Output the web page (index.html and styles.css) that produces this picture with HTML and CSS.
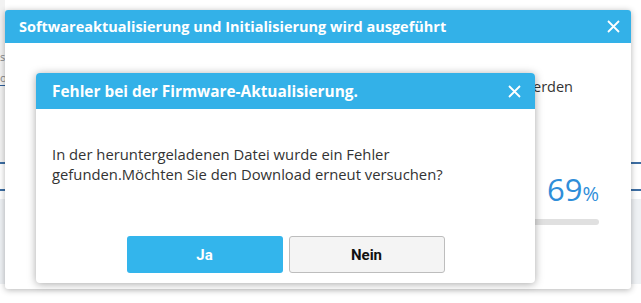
FILE: index.html
```html
<!DOCTYPE html>
<html lang="de">
<head>
    <meta charset="UTF-8">
    <title>Softwareaktualisierung</title>
    <link rel="stylesheet" href="styles.css">
</head>
<body>
    <!-- Hintergrundseite -->
    <div class="page">
        <div class="page-top">
            <span class="frag">s</span>
            <span class="frag frag-link">o</span>
        </div>
        <div class="page-line"></div>
        <div class="page-line line-b"></div>
        <div class="page-band"></div>
    </div>

    <!-- Aktualisierungsdialog -->
    <div class="dialog dialog-update">
        <div class="dialog-header">
            <span class="dialog-title">Softwareaktualisierung und Initialisierung wird ausgeführt</span>
            <svg class="dialog-close" width="13" height="13" viewBox="0 0 13 13"><path d="M1 1L12 12M12 1L1 12" stroke="#fff" stroke-width="1.8"/></svg>
        </div>
        <div class="update-body">
            <p class="update-note">Daten installiert werden</p>
            <div class="update-progress">
                <div class="percent">69<small>%</small></div>
                <div class="bar"><div class="bar-fill" style="width: 69%"></div></div>
            </div>
        </div>
    </div>

    <!-- Fehlerdialog -->
    <div class="dialog dialog-error">
        <div class="dialog-header error-header">
            <span class="dialog-title">Fehler bei der Firmware-Aktualisierung.</span>
            <svg class="dialog-close" width="13" height="13" viewBox="0 0 13 13"><path d="M1 1L12 12M12 1L1 12" stroke="#fff" stroke-width="1.8"/></svg>
        </div>
        <div class="error-body">
            <p>In der heruntergeladenen Datei wurde ein Fehler<br>gefunden.Möchten Sie den Download erneut versuchen?</p>
            <div class="error-actions">
                <button class="btn btn-yes">Ja</button>
                <button class="btn btn-no">Nein</button>
            </div>
        </div>
    </div>
</body>
</html>
```

FILE: styles.css
```css
* {
    margin: 0;
    padding: 0;
    box-sizing: border-box;
}

body {
    font-family: 'Open Sans', 'Noto Sans', sans-serif;
    width: 641px;
    height: 303px;
    overflow: hidden;
    background: #fff;
    color: #333;
    position: relative;
}

/* Seite hinter den Dialogen */
.page {
    display: flex;
    flex-direction: column;
    height: 100%;
}

.page-top {
    height: 162px;
    width: 5px;
    background: #f2f2f2;
    display: flex;
    flex-direction: column;
    padding-top: 49px;
    overflow: hidden;
    font-size: 11px;
    color: #888;
}

.frag-link {
    margin-top: 6px;
    border-bottom: 1px solid #2f5f9a;
}

.page-line {
    height: 2px;
    background: #3d6ea3;
}

.line-b {
    margin-top: 25px;
}

.page-band {
    height: 85px;
    margin-top: 8px;
    background: #eef1f4;
}

/* Dialoge */
.dialog {
    position: absolute;
    background: #fff;
    border-radius: 3px;
    overflow: hidden;
}

.dialog-update {
    left: 5px;
    top: 10px;
    width: 626px;
    height: 279px;
    box-shadow: 0 1px 6px rgba(0, 0, 0, 0.3);
}

.dialog-header {
    height: 33px;
    background: #33b1e8;
    color: #fff;
    display: flex;
    align-items: center;
    justify-content: space-between;
    padding: 0 11px 0 14px;
}

.dialog-title {
    font-weight: 700;
    font-size: 14.5px;
}

.update-body {
    padding: 0 32px 0 20px;
}

.update-note {
    margin: 34px 26px 0 auto;
    width: 240px;
    font-size: 14.5px;
    white-space: nowrap;
    text-align: right;
    height: 20px;
}

.update-progress {
    margin-top: 74px;
    display: flex;
    flex-direction: column;
    align-items: flex-end;
}

.percent {
    font-size: 31px;
    color: #2f8ed9;
    line-height: 36px;
}

.percent small {
    font-size: 20px;
}

.bar {
    margin-top: 7px;
    width: 300px;
    height: 6px;
    border-radius: 3px;
    background: #e0e0e0;
}

.bar-fill {
    height: 100%;
}

.dialog-error {
    left: 36px;
    top: 73px;
    width: 499px;
    height: 210px;
    border-radius: 4px;
    box-shadow: 0 1px 8px rgba(0, 0, 0, 0.35);
}

.error-header {
    height: 36px;
    padding: 0 14px 0 16px;
}

.error-header .dialog-title {
    font-size: 15.4px;
}

.error-body {
    padding: 35px 16px 0 16px;
    font-size: 14.8px;
    line-height: 20px;
}

.error-actions {
    display: flex;
    justify-content: center;
    gap: 6px;
    margin-top: 52px;
}

.btn {
    width: 156px;
    height: 37px;
    border-radius: 3px;
    font-family: 'Roboto', sans-serif;
    font-weight: 700;
    font-size: 15px;
    cursor: pointer;
}

.btn-yes {
    background: #33b5ec;
    border: none;
    color: #fff;
}

.btn-no {
    background: #f4f4f4;
    border: 1px solid #bdbdbd;
    color: #111;
}
```
